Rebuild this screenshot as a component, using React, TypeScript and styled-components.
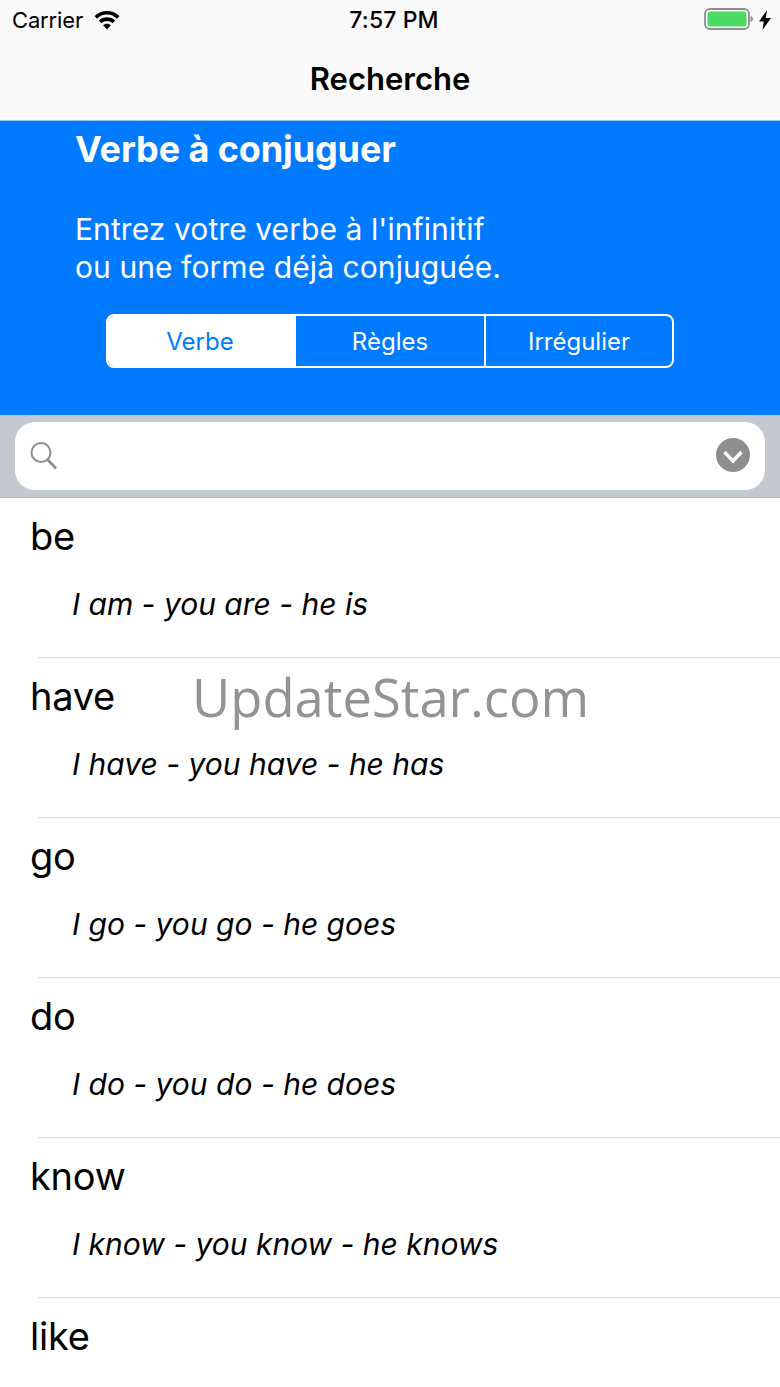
import styled, { createGlobalStyle } from 'styled-components'

const GlobalStyle = createGlobalStyle`
  html, body {
    margin: 0;
    padding: 0;
    background: #ffffff;
    font-family: Inter, "Liberation Sans", sans-serif;
    color: #000000;
  }
`

const Screen = styled.div`
  position: relative;
  width: 780px;
  height: 1387px;
  overflow: hidden;
  background: #ffffff;
`

const TopBar = styled.header`
  height: 121px;
  box-sizing: border-box;
  background: #f9f9f9;
  border-bottom: 1px solid #8fc4f5;
`

const StatusBar = styled.div`
  height: 40px;
  padding: 0 9px 0 12px;
  display: grid;
  grid-template-columns: 1fr auto 1fr;
  align-items: center;
`

const StatusLeft = styled.div`
  display: flex;
  align-items: center;
  gap: 11px;
  font-size: 22px;
  letter-spacing: -0.15px;
`

const StatusTime = styled.div`
  margin-left: 5px;
  font-size: 23px;
  font-weight: 500;
  letter-spacing: 0.1px;
`

const StatusRight = styled.div`
  display: flex;
  justify-content: flex-end;
  align-items: center;
  gap: 5px;
`

const NavTitle = styled.h1`
  margin: 0;
  height: 80px;
  line-height: 78px;
  text-align: center;
  font-size: 31px;
  font-weight: 600;
`

const Hero = styled.section`
  height: 294px;
  box-sizing: border-box;
  background: #007aff;
  color: #ffffff;
  padding: 7px 0 0 76px;
`

const HeroTitle = styled.h2`
  margin: 0 0 0 -1px;
  font-size: 36px;
  line-height: 42px;
  font-weight: 700;
  letter-spacing: -0.1px;
`

const HeroText = styled.p`
  margin: 40px 0 0 -1px;
  font-size: 30px;
  line-height: 38px;
  font-weight: 400;
  letter-spacing: 0.08px;
`

const Segments = styled.div`
  display: grid;
  grid-template-columns: repeat(3, 1fr);
  width: 568px;
  height: 54px;
  box-sizing: border-box;
  margin: 28px 0 0 30px;
  border: 2px solid #ffffff;
  border-radius: 8px;
  overflow: hidden;
`

const Segment = styled.div<{ $active?: boolean }>`
  box-sizing: border-box;
  display: flex;
  align-items: center;
  justify-content: center;
  padding-right: ${(p) => (p.$active ? '4px' : '0')};
  font-size: 24px;
  color: ${(p) => (p.$active ? '#007aff' : '#ffffff')};
  background: ${(p) => (p.$active ? '#ffffff' : 'transparent')};
  & + & + & {
    border-left: 2px solid #ffffff;
  }
`

const SearchBar = styled.div`
  height: 83px;
  box-sizing: border-box;
  padding: 7px 15px;
  background: #c4c8d0;
  border-bottom: 1px solid #b4b7bd;
`

const SearchField = styled.div`
  height: 68px;
  box-sizing: border-box;
  padding: 0 15px;
  display: flex;
  align-items: center;
  justify-content: space-between;
  background: #ffffff;
  border-radius: 20px;
`

const DropdownButton = styled.svg`
  display: block;
  margin-top: -2px;
`

const VerbList = styled.ul`
  list-style: none;
  margin: 0;
  padding: 0;
`

const VerbRow = styled.li`
  position: relative;
  height: 160px;
  box-sizing: border-box;
  padding: 14px 0 0 30px;
  &::after {
    content: '';
    position: absolute;
    left: 38px;
    right: 0;
    bottom: 0;
    height: 1px;
    background: #d4d4d6;
  }
`

const VerbName = styled.div`
  font-size: 38px;
  line-height: 48px;
  letter-spacing: -0.25px;
`

const VerbForms = styled.div`
  margin: 24px 0 0 42px;
  font-size: 30px;
  line-height: 40px;
  font-style: italic;
`

const Watermark = styled.div`
  position: absolute;
  left: 192px;
  top: 659px;
  font-family: "Open Sans", sans-serif;
  font-size: 52.5px;
  line-height: 76px;
  color: #939393;
`

const verbs = [
  { name: 'be', forms: 'I am - you are - he is' },
  { name: 'have', forms: 'I have - you have - he has' },
  { name: 'go', forms: 'I go - you go - he goes' },
  { name: 'do', forms: 'I do - you do - he does' },
  { name: 'know', forms: 'I know - you know - he knows' },
  { name: 'like', forms: '' },
]

const WifiIcon = () => (
  <svg width="26" height="19" viewBox="0 0 26 19" fill="#000">
    <path d="M13 0C8 0 3.800 1.900 .500 5l2.500 2.700C5.600 5.200 9.100 3.600 13 3.600s7.400 1.600 10 4.100L25.500 5C22.200 1.900 18 0 13 0z" />
    <path d="M13 6.300c-3.200 0-6 1.200-8.100 3.200l2.500 2.700c1.500-1.400 3.400-2.300 5.600-2.300s4.100.9 5.600 2.300l2.500-2.700c-2.100-2-4.900-3.200-8.100-3.200z" />
    <path d="M13 12.800c-1.500 0-2.900.6-3.900 1.500L13 18.600l3.900-4.300c-1-.9-2.400-1.500-3.900-1.500z" />
  </svg>
)

const BatteryIcon = () => (
  <svg width="50" height="22" viewBox="0 0 50 22" style={{ marginTop: -3 }}>
    <rect x="1" y="1" width="44" height="20" rx="5" fill="none" stroke="#8e8e8e" strokeWidth="1.800" />
    <rect x="3.500" y="3.500" width="39" height="15" rx="2.500" fill="#4cd964" />
    <path d="M46.500 8c1.500.3 2.400 1.500 2.400 3s-.9 2.700-2.400 3z" fill="#8e8e8e" />
  </svg>
)

const BoltIcon = () => (
  <svg width="12" height="20" viewBox="0 0 12 20" fill="#000">
    <path d="M8 0 0 11.500h4.800L3.500 20 12 8H6.800z" />
  </svg>
)

const SearchIcon = () => (
  <svg width="28" height="28" viewBox="0 0 28 28" fill="none" stroke="#8e8e93" strokeWidth="2">
    <circle cx="11" cy="10.500" r="9.500" />
    <path d="M17 17l9 9.500" strokeWidth="2.800" />
  </svg>
)

const DropdownIcon = () => (
  <DropdownButton width="34" height="34" viewBox="0 0 34 34">
    <circle cx="17" cy="17" r="17" fill="#8e8e8e" />
    <path d="M8.500 14l8.500 9 8.500-9" fill="none" stroke="#fff" strokeWidth="3.400" />
  </DropdownButton>
)

export default function App() {
  return (
    <Screen>
      <GlobalStyle />
      <TopBar>
        <StatusBar>
          <StatusLeft>
            Carrier
            <WifiIcon />
          </StatusLeft>
          <StatusTime>7:57 PM</StatusTime>
          <StatusRight>
            <BatteryIcon />
            <BoltIcon />
          </StatusRight>
        </StatusBar>
        <NavTitle>Recherche</NavTitle>
      </TopBar>
      <Hero>
        <HeroTitle>Verbe à conjuguer</HeroTitle>
        <HeroText>
          Entrez votre verbe à l'infinitif
          <br />
          ou une forme déjà conjuguée.
        </HeroText>
        <Segments>
          <Segment $active>Verbe</Segment>
          <Segment>Règles</Segment>
          <Segment>Irrégulier</Segment>
        </Segments>
      </Hero>
      <SearchBar>
        <SearchField>
          <SearchIcon />
          <DropdownIcon />
        </SearchField>
      </SearchBar>
      <VerbList>
        {verbs.map((verb) => (
          <VerbRow key={verb.name}>
            <VerbName>{verb.name}</VerbName>
            <VerbForms>{verb.forms}</VerbForms>
          </VerbRow>
        ))}
      </VerbList>
      <Watermark>UpdateStar.com</Watermark>
    </Screen>
  )
}
